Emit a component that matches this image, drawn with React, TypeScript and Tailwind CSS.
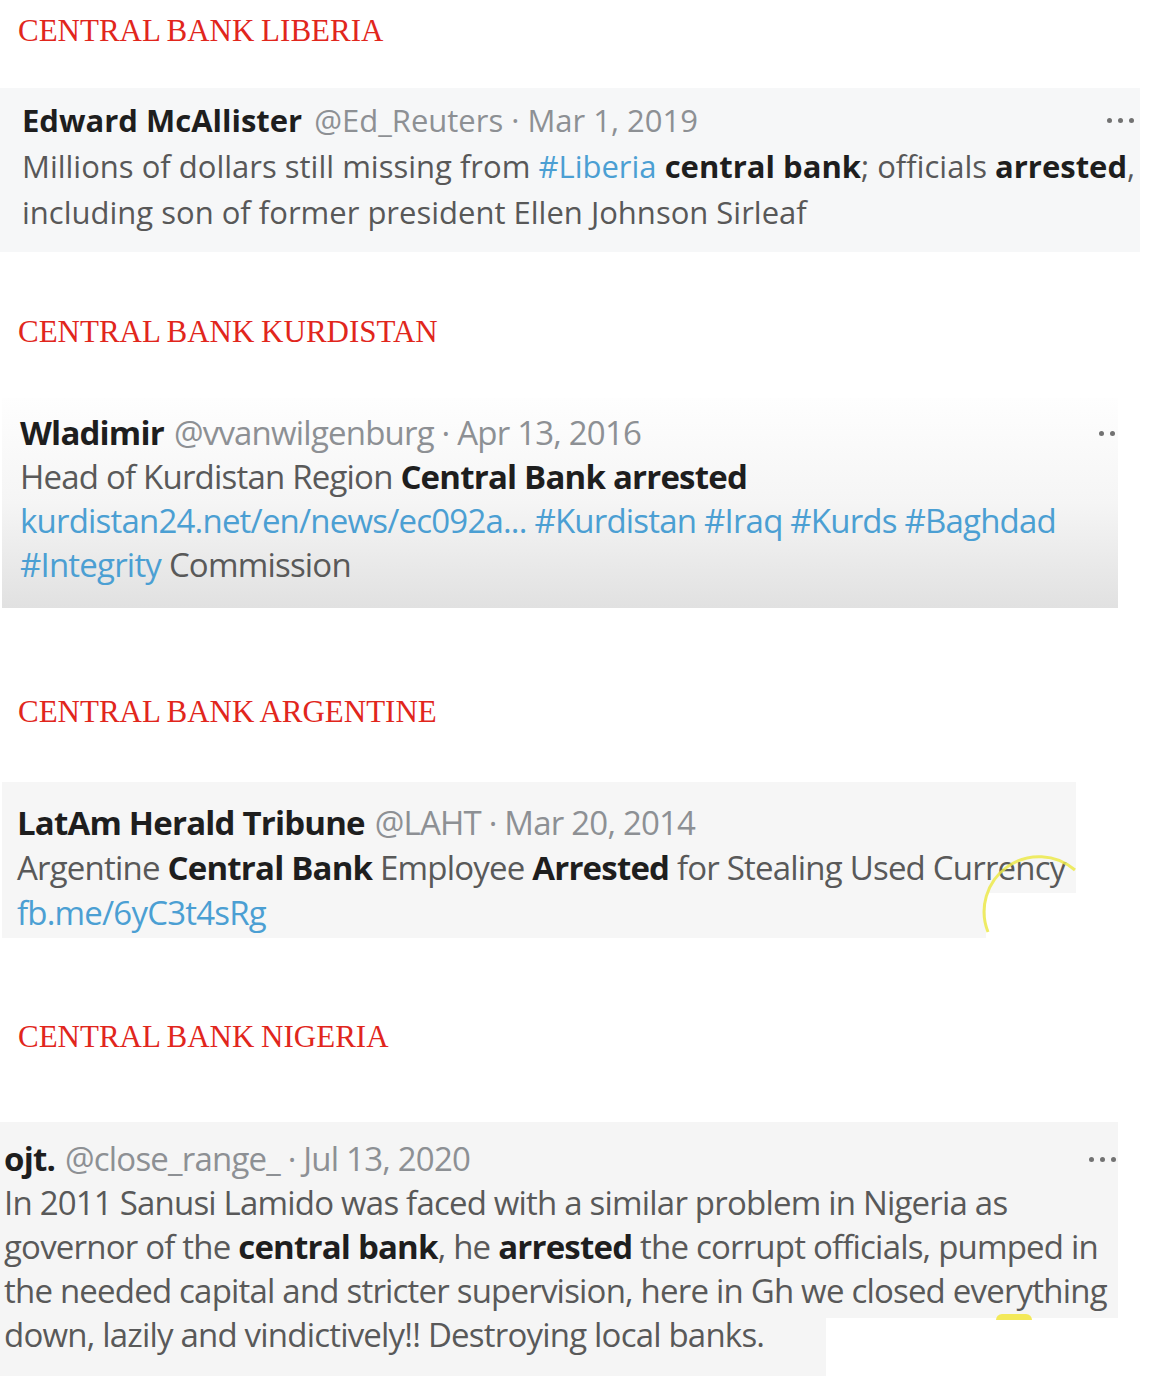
import type { ReactNode } from "react";

const serif = "font-['Liberation_Serif','Times_New_Roman',serif]";
const sans = "font-['Open_Sans','Noto_Sans',sans-serif]";

function Heading({ children, className }: { children: ReactNode; className: string }) {
  return (
    <h2
      className={`${serif} pl-[18px] text-[31px] leading-10 text-[#e1261c] [word-spacing:-1px] ${className}`}
    >
      {children}
    </h2>
  );
}

function Dots({ className }: { className?: string }) {
  return (
    <div className={`flex gap-[6px] ${className ?? ""}`}>
      <span className="size-[5px] rounded-full bg-[#727272]" />
      <span className="size-[5px] rounded-full bg-[#727272]" />
      <span className="size-[5px] rounded-full bg-[#727272]" />
    </div>
  );
}

const B = ({ children }: { children: ReactNode }) => (
  <span className="font-bold text-[#1e1e1e]">{children}</span>
);
const Tag = ({ children }: { children: ReactNode }) => (
  <span className="text-[#4b9fd3]">{children}</span>
);
const Meta = ({ children }: { children: ReactNode }) => (
  <span className="text-[#8d9094]">{children}</span>
);

export default function App() {
  return (
    <div className="min-h-[1376px] w-[1158px] overflow-hidden bg-white">
      <Heading className="mt-[11px]">CENTRAL BANK LIBERIA</Heading>

      <div
        className={`${sans} mt-[37px] h-[164px] w-[1140px] whitespace-nowrap bg-[#f6f7f8] pl-[22px] pt-[9px] text-[31px] leading-[46px] text-[#585858]`}
      >
        <div className="flex items-center gap-[12px]">
          <B>Edward McAllister</B>
          <Meta>@Ed_Reuters · Mar 1, 2019</Meta>
          <Dots className="ml-auto mr-[6px]" />
        </div>
        <div>
          Millions of dollars still missing from <Tag>#Liberia</Tag> <B>central bank</B>; officials{" "}
          <B>arrested</B>,
        </div>
        <div>including son of former president Ellen Johnson Sirleaf</div>
      </div>

      <Heading className="mt-[60px]">CENTRAL BANK KURDISTAN</Heading>

      <div
        className={`${sans} mt-[46px] ml-[2px] h-[210px] w-[1116px] overflow-hidden whitespace-nowrap bg-linear-to-b from-[#fefefe] via-[#f5f5f5] to-[#e1e1e1] pl-[18px] pt-[13px] text-[33px] leading-[44px] tracking-[-0.8px] text-[#595959]`}
      >
        <div className="flex items-center gap-[10px]">
          <B>Wladimir</B>
          <Meta>@vvanwilgenburg · Apr 13, 2016</Meta>
          <Dots className="ml-auto -mr-[8px]" />
        </div>
        <div>
          Head of Kurdistan Region <B>Central Bank arrested</B>
        </div>
        <div>
          <Tag>kurdistan24.net/en/news/ec092a... #Kurdistan #Iraq #Kurds #Baghdad</Tag>
        </div>
        <div>
          <Tag>#Integrity</Tag> Commission
        </div>
      </div>

      <Heading className="mt-[84px]">CENTRAL BANK ARGENTINE</Heading>

      <div
        className={`${sans} relative mt-[50px] ml-[2px] h-[156px] w-[1074px] overflow-hidden whitespace-nowrap bg-[#f6f6f6] pl-[15px] pt-[18px] text-[33px] leading-[45px] tracking-[-0.8px] text-[#595959]`}
      >
        <div className="flex items-center gap-[10px]">
          <B>LatAm Herald Tribune</B>
          <Meta>@LAHT · Mar 20, 2014</Meta>
        </div>
        <div>
          Argentine <B>Central Bank</B> Employee <B>Arrested</B> for Stealing Used Currency
        </div>
        <div>
          <Tag>fb.me/6yC3t4sRg</Tag>
        </div>
        <div className="absolute left-[984px] top-[111px] h-[45px] w-[90px] bg-white" />
        <svg className="absolute left-[960px] top-[50px]" width="114" height="106" viewBox="0 0 114 106">
          <path
            d="M 26 100 A 55 55 0 0 1 113 38"
            fill="none"
            stroke="#ece94a"
            strokeOpacity="0.85"
            strokeWidth="3"
          />
        </svg>
      </div>

      <Heading className="mt-[79px]">CENTRAL BANK NIGERIA</Heading>

      <div
        className={`${sans} relative mt-[65px] h-[254px] w-[1118px] overflow-hidden whitespace-nowrap bg-[#f5f5f5] pl-[4px] pt-[15px] text-[33px] leading-[44px] tracking-[-0.8px] text-[#595959]`}
      >
        <div className="flex items-center gap-[10px]">
          <B>ojt.</B>
          <Meta>@close_range_ · Jul 13, 2020</Meta>
          <Dots className="ml-auto mr-[2px]" />
        </div>
        <div>In 2011 Sanusi Lamido was faced with a similar problem in Nigeria as</div>
        <div>
          governor of the <B>central bank</B>, he <B>arrested</B> the corrupt officials, pumped in
        </div>
        <div>the needed capital and stricter supervision, here in Gh we closed everything</div>
        <div>down, lazily and vindictively!! Destroying local banks.</div>
        <div className="absolute left-[826px] top-[196px] h-[58px] w-[292px] bg-white" />
        <div className="absolute left-[996px] top-[192px] h-[6px] w-[36px] rounded-t-full bg-[#f3e95a]" />
      </div>
    </div>
  );
}
